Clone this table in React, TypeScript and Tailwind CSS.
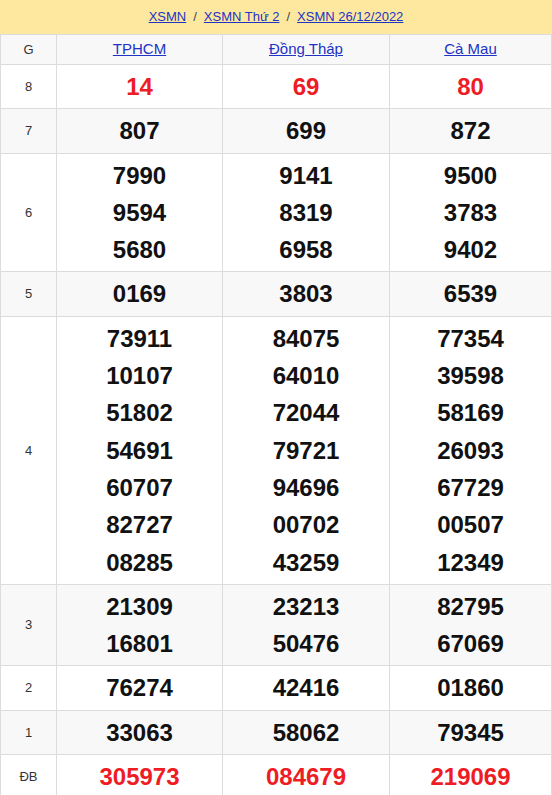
import React from 'react';

type Prize = { label: string; values: string[][]; red?: boolean };

const provinces = ['TPHCM', 'Đồng Tháp', 'Cà Mau'];

const prizes: Prize[] = [
  { label: '8', values: [['14'], ['69'], ['80']], red: true },
  { label: '7', values: [['807'], ['699'], ['872']] },
  { label: '6', values: [['7990', '9594', '5680'], ['9141', '8319', '6958'], ['9500', '3783', '9402']] },
  { label: '5', values: [['0169'], ['3803'], ['6539']] },
  {
    label: '4',
    values: [
      ['73911', '10107', '51802', '54691', '60707', '82727', '08285'],
      ['84075', '64010', '72044', '79721', '94696', '00702', '43259'],
      ['77354', '39598', '58169', '26093', '67729', '00507', '12349'],
    ],
  },
  { label: '3', values: [['21309', '16801'], ['23213', '50476'], ['82795', '67069']] },
  { label: '2', values: [['76274'], ['42416'], ['01860']] },
  { label: '1', values: [['33063'], ['58062'], ['79345']] },
  { label: 'ĐB', values: [['305973'], ['084679'], ['219069']], red: true },
];

export default function App() {
  return (
    <div className="w-[552px] bg-white font-['Liberation_Sans',Arial,sans-serif]">
      {/* breadcrumb */}
      <div className="flex h-[34px] items-center justify-center gap-[7px] bg-[#fee89f] text-[13px] text-[#444]">
        <a className="text-[#2133c4] underline">XSMN</a>
        <span>/</span>
        <a className="text-[#2133c4] underline">XSMN Thứ 2</a>
        <span>/</span>
        <a className="text-[#2133c4] underline">XSMN 26/12/2022</a>
      </div>

      <table className="w-full table-fixed border-collapse">
        <colgroup>
          <col className="w-[56px]" />
          <col className="w-[166px]" />
          <col className="w-[167px]" />
          <col />
        </colgroup>
        <thead>
          <tr className="h-[30px] bg-[#f8f8f8]">
            <th className="border border-[#dcdcdc] text-[13px] font-normal text-[#333]">G</th>
            {provinces.map((p) => (
              <th key={p} className="border border-[#dcdcdc] text-[15px] font-normal">
                <a className="text-[#2133c4] underline">{p}</a>
              </th>
            ))}
          </tr>
        </thead>
        <tbody>
          {prizes.map((prize, i) => (
            <tr key={prize.label} className={i % 2 === 1 ? 'bg-[#f8f8f8]' : 'bg-white'}>
              <td className="border border-[#dcdcdc] text-center text-[13px] text-[#333]">{prize.label}</td>
              {prize.values.map((col, j) => (
                <td key={j} className="border border-[#dcdcdc] py-[3px] text-center">
                  {col.map((v) => (
                    <div
                      key={v}
                      className={`text-[24px] font-bold leading-[37.3px] ${prize.red ? 'text-[#ee1c25]' : 'text-[#111]'}`}
                    >
                      {v}
                    </div>
                  ))}
                </td>
              ))}
            </tr>
          ))}
        </tbody>
      </table>
    </div>
  );
}
